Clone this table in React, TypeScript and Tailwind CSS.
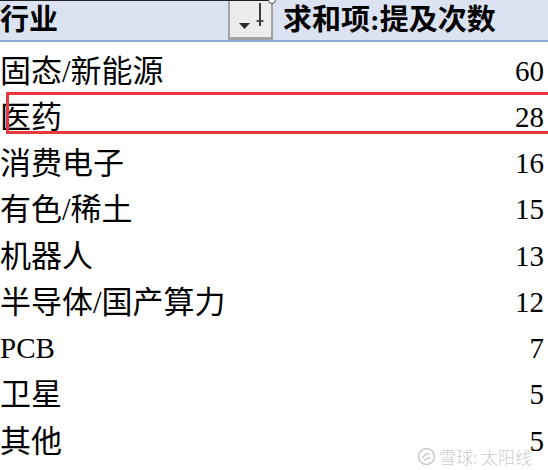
import React from "react";

const rows: [string, number][] = [
  ["固态/新能源", 60],
  ["医药", 28],
  ["消费电子", 16],
  ["有色/稀土", 15],
  ["机器人", 13],
  ["半导体/国产算力", 12],
  ["PCB", 7],
  ["卫星", 5],
  ["其他", 5],
];

const font = { fontFamily: '"Liberation Serif", "Noto Sans CJK SC", serif' };

export default function App() {
  return (
    <div className="relative w-[548px] h-[470px] overflow-hidden bg-white text-black" style={font}>
      {/* header */}
      <div className="relative flex h-[42px] bg-[#dbe3f3] border-b-2 border-[#8eaadb]">
        <div className="flex-1 flex items-center text-[29px] font-bold leading-none">行业</div>
        <div className="w-[45px] h-[40px] bg-[#ececec] border-x-2 border-b-[3px] border-[#a3a3a3]">
          <svg width="41" height="37" viewBox="0 0 41 37">
            <path d="M9 23 L20 23 L14.5 29 Z" fill="#2a2a2a" />
            <path d="M30 3 L30 26" stroke="#2a2a2a" strokeWidth="1.8" />
            <path d="M26.5 21 L33.5 21" stroke="#2a2a2a" strokeWidth="1.5" />
          </svg>
        </div>
        <div className="w-[275px] flex items-center pl-[10px] text-[29px] font-bold leading-none whitespace-nowrap">求和项:提及次数</div>
        <div className="absolute left-0 top-0 w-[270px] h-px bg-[#222]" />
        <div className="absolute left-[268px] top-[-4px] w-[8px] h-[8px] rounded-full border border-[#444] bg-white" />
      </div>
      {/* rows */}
      <div className="flex flex-col pt-[6px]">
        {rows.map(([name, n]) => (
          <div key={name} className="flex items-center justify-between h-[46.25px] leading-none">
            <span className={name === "PCB" ? "whitespace-nowrap text-[29px]" : "whitespace-nowrap text-[31px]"}>{name}</span>
            <span className="pr-[4px] text-[29px]">{n}</span>
          </div>
        ))}
      </div>
      {/* highlight box */}
      <div className="absolute left-[6px] top-[92px] w-[560px] h-[42px] border-[3px] border-[#e8383f]" />
      {/* watermark */}
      <div className="absolute left-[417px] top-[444px] flex items-center gap-[3px] text-[#cccccc] text-[17px] font-light" style={{ fontFamily: '"Noto Sans CJK SC", sans-serif' }}>
        <svg width="19" height="19" viewBox="0 0 18 18">
          <circle cx="9" cy="9" r="7.5" fill="none" stroke="#cccccc" strokeWidth="1.5" />
          <path d="M5 11 Q8 5 12 7 M7 13 Q10 9 13 11" fill="none" stroke="#cccccc" strokeWidth="1.4" />
        </svg>
        <span>雪球: 太阳线</span>
      </div>
    </div>
  );
}
